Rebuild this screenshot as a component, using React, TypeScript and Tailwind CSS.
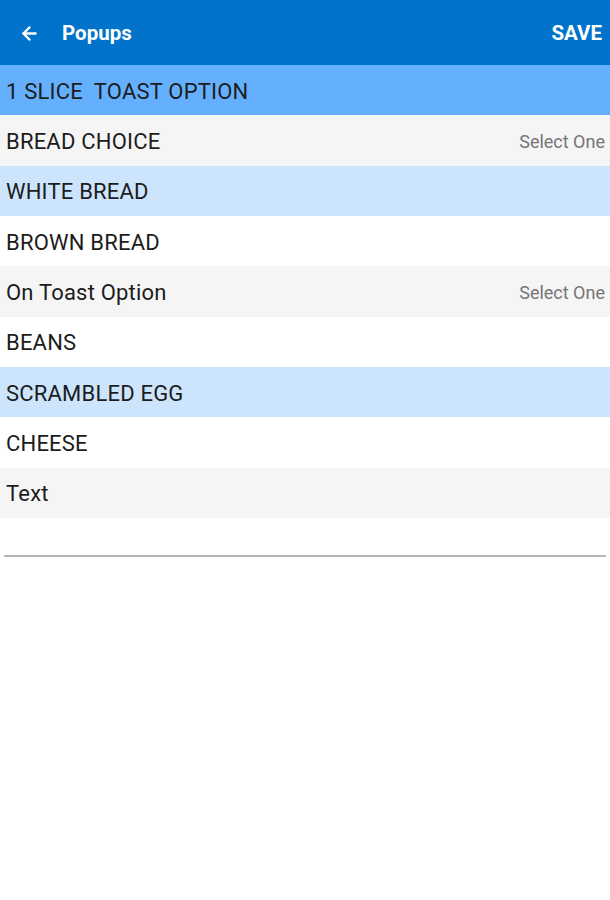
import { ArrowLeft } from "lucide-react";

type Row = { label: string; bg: string; hint?: string };

const rows: Row[] = [
  { label: "1 SLICE\u00a0 TOAST OPTION", bg: "bg-[#64b0ff]" },
  { label: "BREAD CHOICE", bg: "bg-[#f5f5f5]", hint: "Select One" },
  { label: "WHITE BREAD", bg: "bg-[#cce5fd]" },
  { label: "BROWN BREAD", bg: "bg-white" },
  { label: "On Toast Option", bg: "bg-[#f5f5f5]", hint: "Select One" },
  { label: "BEANS", bg: "bg-white" },
  { label: "SCRAMBLED EGG", bg: "bg-[#cce5fd]" },
  { label: "CHEESE", bg: "bg-white" },
  { label: "Text", bg: "bg-[#f5f5f5]" },
];

export default function App() {
  return (
    <div className="w-[610px] h-[900px] bg-white font-['Roboto',sans-serif] overflow-hidden">
      {/* Toolbar */}
      <header className="h-[65px] bg-[#0273ca] flex items-center pl-[19px] pr-[8px] pt-[2px] text-white">
        <ArrowLeft size={21} strokeWidth={2.6} />
        <span className="ml-[22px] text-[20.5px] font-bold">Popups</span>
        <span className="ml-auto text-[20.5px] font-bold">SAVE</span>
      </header>

      {/* Options list */}
      {rows.map((r) => (
        <div
          key={r.label}
          className={`h-[50.33px] flex items-center pl-[6px] pr-[5px] pt-[2px] ${r.bg}`}
        >
          <span className="text-[22px] tracking-[0.2px] text-[#1c1c1c]">{r.label}</span>
          {r.hint && (
            <span className="ml-auto text-[18px] text-[#757575]">{r.hint}</span>
          )}
        </div>
      ))}

      {/* Text input */}
      <div className="h-[44px] px-[4px] flex items-end pb-[5px]">
        <div className="w-full h-[2px] bg-[#b5b5b5]" />
      </div>
    </div>
  );
}
